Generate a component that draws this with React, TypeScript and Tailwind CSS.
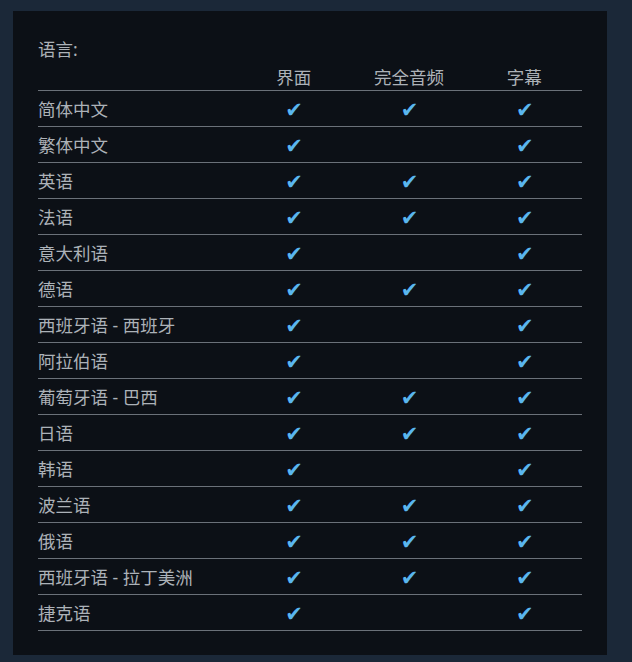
import React from "react";

const rows: [string, boolean, boolean, boolean][] = [
  ["简体中文", true, true, true],
  ["繁体中文", true, false, true],
  ["英语", true, true, true],
  ["法语", true, true, true],
  ["意大利语", true, false, true],
  ["德语", true, true, true],
  ["西班牙语 - 西班牙", true, false, true],
  ["阿拉伯语", true, false, true],
  ["葡萄牙语 - 巴西", true, true, true],
  ["日语", true, true, true],
  ["韩语", true, false, true],
  ["波兰语", true, true, true],
  ["俄语", true, true, true],
  ["西班牙语 - 拉丁美洲", true, true, true],
  ["捷克语", true, false, true],
];

const font = { fontFamily: '"Noto Sans", "Noto Sans CJK SC", sans-serif' };

function Check({ on }: { on: boolean }) {
  return (
    <div className="flex items-center justify-center pt-[3px]">
      {on ? (
        <span
          className="text-[21px] leading-none text-[#5ab6ee] ml-[1px]"
          style={{ fontFamily: '"DejaVu Sans", sans-serif' }}
        >
          ✔
        </span>
      ) : null}
    </div>
  );
}

export default function App() {
  return (
    <div className="min-h-[662px] w-[632px] bg-[#1b2838] pt-[11px] pl-[13px]" style={font}>
      <div className="w-[594px] h-[644px] bg-[#0c1016] px-[25px] pt-[26px]">
        <div className="text-[17.5px] leading-[24px] text-[#acb2b8]">语言:</div>
        <div className="w-[544px] mt-[4px]">
          <div className="grid grid-cols-[198px_1fr_1fr_1fr] h-[26px] border-b border-[#6b7179] text-[17.5px] leading-[24px] text-[#acb2b8]">
            <div></div>
            <div className="text-center">界面</div>
            <div className="text-center">完全音频</div>
            <div className="text-center">字幕</div>
          </div>
          {rows.map(([name, a, b, c]) => (
            <div
              key={name}
              className="grid grid-cols-[198px_1fr_1fr_1fr] h-[36px] items-center border-b border-[#6b7179] text-[17.5px] text-[#acb2b8]"
            >
              <div className="leading-[24px]">{name}</div>
              <Check on={a} />
              <Check on={b} />
              <Check on={c} />
            </div>
          ))}
        </div>
      </div>
    </div>
  );
}
